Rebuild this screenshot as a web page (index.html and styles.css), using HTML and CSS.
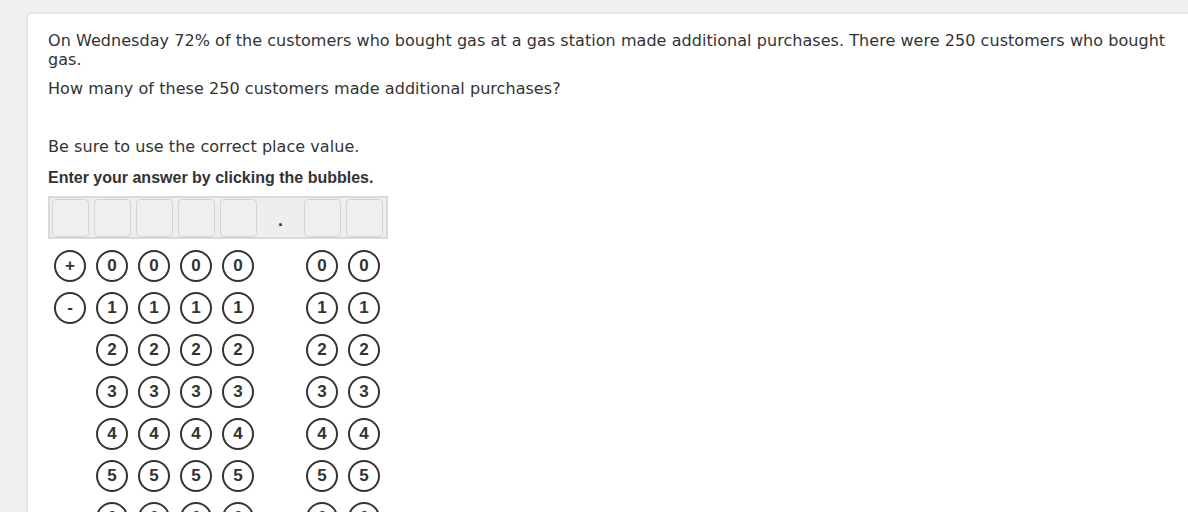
FILE: index.html
```html
<!DOCTYPE html>
<html>
<head>
<meta charset="utf-8">
<link rel="stylesheet" href="styles.css">
</head>
<body>
<div class="card">
  <p class="q">On Wednesday 72% of the customers who bought gas at a gas station made additional purchases. There were 250 customers who bought gas.</p>
  <p class="q q2">How many of these 250 customers made additional purchases?</p>
  <p class="q q3">Be sure to use the correct place value.</p>
  <p class="instr">Enter your answer by clicking the bubbles.</p>
  <div class="answer">
    <div class="cell"></div><div class="cell"></div><div class="cell"></div><div class="cell"></div><div class="cell"></div>
    <div class="dot">.</div>
    <div class="cell"></div><div class="cell"></div>
  </div>
  <div class="grid">
    <div class="col sign"><span class="b">+</span><span class="b">-</span></div>
    <div class="col"><span class="b">0</span><span class="b">1</span><span class="b">2</span><span class="b">3</span><span class="b">4</span><span class="b">5</span><span class="b">6</span></div>
    <div class="col"><span class="b">0</span><span class="b">1</span><span class="b">2</span><span class="b">3</span><span class="b">4</span><span class="b">5</span><span class="b">6</span></div>
    <div class="col"><span class="b">0</span><span class="b">1</span><span class="b">2</span><span class="b">3</span><span class="b">4</span><span class="b">5</span><span class="b">6</span></div>
    <div class="col"><span class="b">0</span><span class="b">1</span><span class="b">2</span><span class="b">3</span><span class="b">4</span><span class="b">5</span><span class="b">6</span></div>
    <div class="col"></div>
    <div class="col"><span class="b">0</span><span class="b">1</span><span class="b">2</span><span class="b">3</span><span class="b">4</span><span class="b">5</span><span class="b">6</span></div>
    <div class="col"><span class="b">0</span><span class="b">1</span><span class="b">2</span><span class="b">3</span><span class="b">4</span><span class="b">5</span><span class="b">6</span></div>
  </div>
</div>
</body>
</html>
```
FILE: styles.css
```css
html, body {
  margin: 0;
  padding: 0;
  height: 100%;
  overflow: hidden;
}
body {
  background: #f0f0f0;
  padding: 14px 0 0 28px;
  box-sizing: border-box;
}
.card {
  background: #fff;
  border-radius: 4px 0 0 0;
  box-shadow: 0 0 3px rgba(0,0,0,0.18);
  padding: 17px 20px 0 20px;
  width: 1125px;
  height: 600px;
  font-family: "DejaVu Sans", Verdana, sans-serif;
  font-size: 16px;
  color: #333;
}
.q {
  margin: 0;
  line-height: 19px;
  letter-spacing: 0.05px;
}
.q2 {
  margin-top: 10px;
}
.q3 {
  margin-top: 39px;
}
.instr {
  margin: 12px 0 0 0;
  font-family: "Liberation Sans", Arial, sans-serif;
  font-weight: bold;
  font-size: 16px;
  line-height: 19px;
  color: #333;
}
.answer {
  margin-top: 9px;
  width: 334px;
  height: 39px;
  border: 2px solid #d9d9d9;
  background: #eeeeee;
  display: flex;
  align-items: center;
  gap: 5px;
  padding: 0 0 0 2px;
}
.cell {
  width: 35px;
  height: 36px;
  border: 1px solid #d4d4d4;
  border-radius: 4px;
  background: #efefef;
}
.dot {
  width: 37px;
  height: 38px;
  text-align: center;
  line-height: 44px;
  font-weight: bold;
  font-size: 14px;
  color: #333;
}
.grid {
  display: flex;
  gap: 10px;
  margin-top: 11px;
  margin-left: 6px;
}
.col {
  display: flex;
  flex-direction: column;
  gap: 10px;
  width: 32px;
}
.b {
  width: 28px;
  height: 28px;
  border: 2px solid #333;
  border-radius: 50%;
  display: flex;
  align-items: center;
  justify-content: center;
  font-family: "Liberation Sans", Arial, sans-serif;
  font-weight: bold;
  font-size: 17px;
  color: #333;
}
```
